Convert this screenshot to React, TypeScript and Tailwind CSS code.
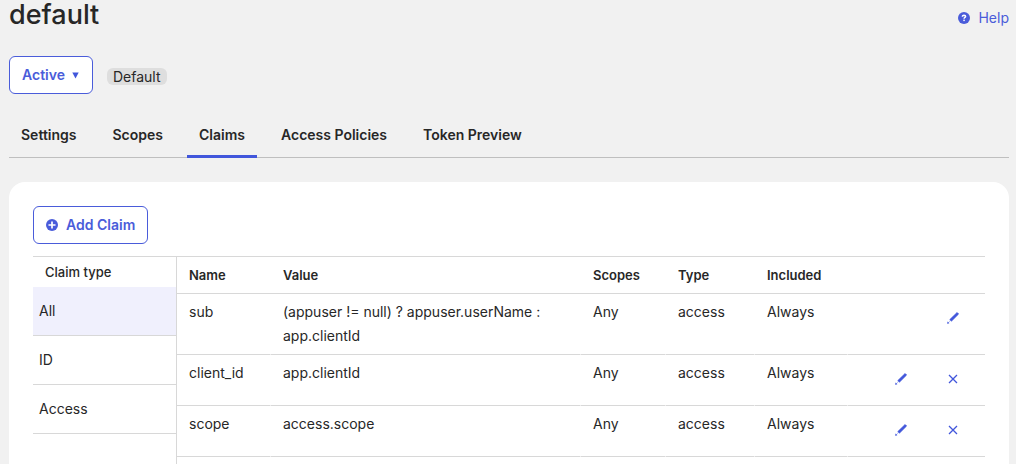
import { useState } from "react";

const tabs = ["Settings", "Scopes", "Claims", "Access Policies", "Token Preview"];
const claimTypes = ["All", "ID", "Access"];

interface Claim {
  name: string;
  value: string;
  removable: boolean;
}

const claims: Claim[] = [
  { name: "sub", value: "(appuser != null) ? appuser.userName : app.clientId", removable: false },
  { name: "client_id", value: "app.clientId", removable: true },
  { name: "scope", value: "access.scope", removable: true },
];

function HelpIcon() {
  return (
    <svg width="12" height="12" viewBox="0 0 12 12" aria-hidden="true">
      <circle cx="6" cy="6" r="6" fill="#4a5cda" />
      <path d="M4.4 4.7C4.4 3.7 5.1 3.2 6 3.2s1.6.5 1.6 1.3c0 .9-1.5 1-1.5 2.2" fill="none" stroke="#fff" strokeWidth="1.5" />
      <rect x="5.3" y="7.6" width="1.5" height="1.5" fill="#fff" />
    </svg>
  );
}

function PlusIcon() {
  return (
    <svg width="12" height="12" viewBox="0 0 12 12" aria-hidden="true">
      <circle cx="6" cy="6" r="6" fill="#4a5cda" />
      <path d="M6 2.5v7M2.5 6h7" stroke="#fff" strokeWidth="1.7" />
    </svg>
  );
}

function PencilIcon() {
  return (
    <svg width="12" height="12" viewBox="0 0 12 12" aria-hidden="true">
      <path d="M10.1.5 11.6 2 4.4 9.2 2.8 7.6Z" fill="#4156db" stroke="#4156db" strokeWidth=".7" strokeLinejoin="round" />
      <path d="M2.1 8.5 3.4 9.8 1.9 10.3Z" fill="#b9c1f3" />
      <path d="M.7 9.9 2.1 11.1.5 11.5Z" fill="#4156db" stroke="#4156db" strokeWidth=".5" />
    </svg>
  );
}

function CrossIcon() {
  return (
    <svg width="12" height="12" viewBox="0 0 12 12" aria-hidden="true">
      <path d="M2 2l8 8M10 2l-8 8" stroke="#4156db" strokeWidth="1.3" />
    </svg>
  );
}

const cell = "border-b border-r border-b-[#d8d8d8] border-r-white py-1.5 pl-3 text-left align-top";
const head = "h-[37px] border-b border-[#d8d8d8] pl-3 text-left text-[13px] font-semibold";
const action = "flex h-9 w-[52px] items-center justify-center";

export default function App() {
  const [tab, setTab] = useState("Claims");
  const [type, setType] = useState("All");

  return (
    <main className="flex min-h-screen flex-col bg-[#f1f1f1] pr-[7px] pl-[9px] font-['Inter',sans-serif] text-sm text-[#272727]">
      <header className="flex items-start justify-between">
        <h1 className="text-[27px] leading-[30px] font-medium">default</h1>
        <a href="#help" className="mt-2 flex items-center gap-2 leading-5 text-[#4a5cda]">
          <HelpIcon />
          Help
        </a>
      </header>

      <div className="mt-[26px] flex items-center gap-3.5">
        <button className="flex h-[38px] items-center gap-1.5 rounded-md border border-[#4a5cda] bg-white px-3 font-semibold text-[#4a5cda]">
          Active
          <svg width="9" height="7" viewBox="0 0 9 7" aria-hidden="true">
            <path d="M1.3.5h6.4L4.5 6.5Z" fill="#4156db" />
          </svg>
        </button>
        <span className="mt-0.5 rounded-md bg-[#dedede] px-1.5 leading-[17px]">Default</span>
      </div>

      <nav className="mt-[18px] flex gap-3 border-b border-[#bfbfbf]">
        {tabs.map((t) => (
          <button
            key={t}
            onClick={() => setTab(t)}
            className={`-mb-px h-[46px] border-b-[3px] px-3 pt-0.5 font-semibold ${t === tab ? "border-[#4156db]" : "border-transparent"}`}
          >
            {t}
          </button>
        ))}
      </nav>

      <section className="mt-6 flex flex-1 flex-col rounded-t-2xl bg-white px-6 pt-6">
        <button className="flex h-[38px] items-center gap-2 self-start rounded-md border border-[#4a5cda] bg-white px-3 font-semibold text-[#4a5cda]">
          <PlusIcon />
          Add Claim
        </button>

        <div className="mt-3 flex flex-1 border-t border-[#d8d8d8]">
          <aside className="w-36 shrink-0 border-r border-[#d8d8d8]">
            <h2 className="pl-3 text-[13px] leading-[30px] font-medium">Claim type</h2>
            <ul>
              {claimTypes.map((t) => (
                <li key={t} className="border-b border-[#d8d8d8]">
                  <button
                    onClick={() => setType(t)}
                    className={`block h-12 w-full px-1.5 text-left ${t === type ? "bg-[#f0f0fd]" : "bg-white"}`}
                  >
                    {t}
                  </button>
                </li>
              ))}
            </ul>
          </aside>

          <div className="min-w-0 flex-1">
            <table className="w-full table-fixed border-separate border-spacing-0 leading-6">
              <thead>
                <tr>
                  <th className={`${head} w-[94px]`}>Name</th>
                  <th className={head}>Value</th>
                  <th className={`${head} w-[85px]`}>Scopes</th>
                  <th className={`${head} w-[89px]`}>Type</th>
                  <th className={`${head} w-[93px]`}>Included</th>
                  <td className={`${head} w-[137px]`} />
                </tr>
              </thead>
              <tbody>
                {claims.map((c) => (
                  <tr key={c.name} className="h-[51px]">
                    <td className={cell}>{c.name}</td>
                    <td className={`${cell} pr-6`}>{c.value}</td>
                    <td className={cell}>Any</td>
                    <td className={cell}>access</td>
                    <td className={cell}>Always</td>
                    <td className="border-b border-[#d8d8d8] py-1.5 pr-1.5 align-top">
                      <div className="flex justify-end">
                        <button aria-label={`Edit ${c.name}`} className={action}>
                          <PencilIcon />
                        </button>
                        {c.removable && (
                          <button aria-label={`Delete ${c.name}`} className={action}>
                            <CrossIcon />
                          </button>
                        )}
                      </div>
                    </td>
                  </tr>
                ))}
              </tbody>
            </table>
          </div>
        </div>
      </section>
    </main>
  );
}
